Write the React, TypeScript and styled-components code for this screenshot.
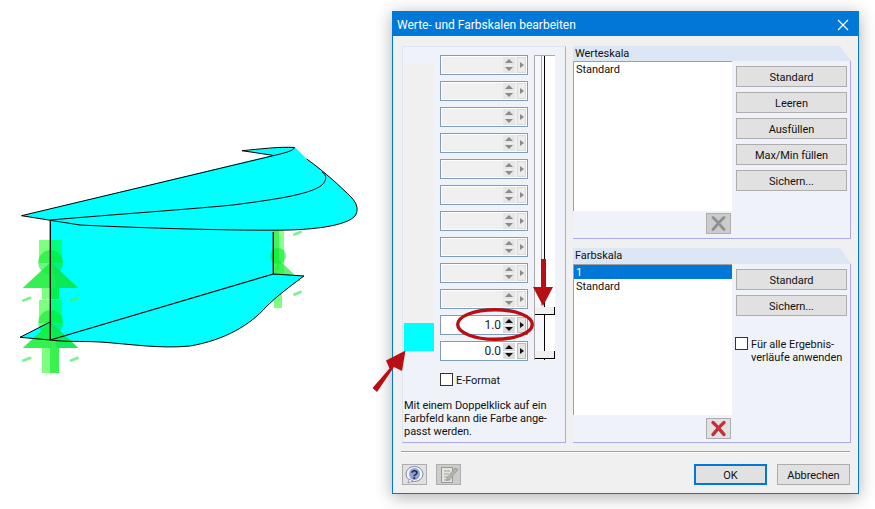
import React from "react";
import styled, { createGlobalStyle } from "styled-components";

const Global = createGlobalStyle`
  html, body { margin: 0; padding: 0; background: #fff; }
  body { font-family: Roboto, "Liberation Sans", sans-serif; font-size: 11px; letter-spacing: -0.05px; color: #111; }
`;

const Page = styled.div`
  position: relative;
  display: flex;
  align-items: flex-start;
  width: 875px;
  height: 509px;
  overflow: hidden;
  background: #fff;
`;
const Drawing = styled.svg`
  flex: none;
  width: 392px;
  height: 509px;
`;
const Overlay = styled.svg`
  position: absolute;
  left: 0;
  top: 0;
  width: 875px;
  height: 509px;
  pointer-events: none;
`;
const Dialog = styled.div`
  flex: none;
  box-sizing: border-box;
  width: 467px;
  height: 483px;
  margin-top: 11px;
  border: 1px solid #0078d7;
  background: #f0f0f0;
  box-shadow: 0 3px 16px rgba(0, 0, 0, 0.32);
`;
const TitleBar = styled.div`
  display: flex;
  align-items: center;
  justify-content: space-between;
  box-sizing: border-box;
  height: 24px;
  padding: 1px 9px 0 4px;
  background: #0078d7;
  color: #fff;
  font-size: 12px;
  letter-spacing: 0;
`;
const CloseIcon = styled.svg`
  width: 12px;
  height: 12px;
`;
const Body = styled.div`
  display: grid;
  grid-template-columns: 164px 278px;
  column-gap: 7px;
  height: 397px;
  padding: 10px 0 0 9px;
`;
const LeftPanel = styled.div`
  box-sizing: border-box;
  display: flex;
  flex-direction: column;
  height: 397px;
  padding-top: 8px;
  background: #eff3f9;
  border: 1px solid #dfe4f3;
  border-right-color: #a9a9ec;
  border-bottom-color: #a9a9ec;
`;
const ScaleArea = styled.div`
  display: flex;
  padding-left: 1px;
`;
const ColorColumn = styled.div`
  flex: none;
  display: flex;
  flex-direction: column;
  justify-content: flex-end;
  box-sizing: border-box;
  width: 30px;
  height: 288px;
  margin-top: 8px;
  margin-right: 6px;
  background: #f0f0f0;
`;
const ColorField = styled.div`
  height: 28px;
  background: #00ffff;
`;
const Rows = styled.div`
  flex: none;
  display: flex;
  flex-direction: column;
  gap: 6px;
  width: 88px;
  margin-right: 6px;
`;
const SpinRow = styled.div<{ $on?: boolean }>`
  box-sizing: border-box;
  display: flex;
  align-items: stretch;
  height: 20px;
  padding: 1px;
  border: 1px solid #7f9db9;
  background: ${(p) => (p.$on ? "#fff" : "#f0f0f0")};
  box-shadow: ${(p) => (p.$on ? "none" : "inset 0 0 0 1px #fff")};
`;
const SpinValue = styled.div`
  flex: 1;
  padding-right: 2px;
  text-align: right;
  font-size: 12px;
  line-height: 16px;
  color: #1a1a3a;
`;
const SpinStack = styled.div`
  flex: none;
  display: flex;
  flex-direction: column;
  gap: 1px;
  width: 12px;
  margin-right: 2px;
`;
const SpinButton = styled.div<{ $on?: boolean }>`
  flex: 1;
  display: flex;
  align-items: center;
  justify-content: center;
  background: ${(p) => (p.$on ? "#dcdcdc" : "#e6e6e6")};
`;
const Triangle = styled.div<{ $dir: "up" | "down" | "right"; $on?: boolean }>`
  width: 0;
  height: 0;
  ${(p) => {
    const c = p.$on ? "#111" : "#8a8a8a";
    if (p.$dir === "up") return `border-left:4px solid transparent;border-right:4px solid transparent;border-bottom:4px solid ${c};`;
    if (p.$dir === "down") return `border-left:4px solid transparent;border-right:4px solid transparent;border-top:4px solid ${c};`;
    return `border-top:3.5px solid transparent;border-bottom:3.5px solid transparent;border-left:4px solid ${c};`;
  }}
`;
const ArrowButton = styled.div<{ $on?: boolean }>`
  flex: none;
  box-sizing: border-box;
  display: flex;
  align-items: center;
  justify-content: center;
  width: 9px;
  background: ${(p) => (p.$on ? "#e4e4e4" : "#ececec")};
  border: 1px solid ${(p) => (p.$on ? "#bcbcbc" : "#dadada")};
`;
const Slider = styled.div`
  position: relative;
  flex: none;
  box-sizing: border-box;
  width: 21px;
  height: 305px;
  border-left: 1px solid #a8a8a8;
  border-top: 1px solid #a8a8a8;
  background: linear-gradient(
    to right,
    #f6f8fc 0 9px,
    #000 9px 10px,
    #fff 10px 100%
  );
`;
const SliderGroove = styled.div`
  position: absolute;
  left: 6px;
  top: 0;
  width: 1px;
  height: 250px;
  background: #a8a8a8;
`;
const Thumb = styled.div<{ $top: number }>`
  position: absolute;
  left: 0;
  top: ${(p) => p.$top}px;
  box-sizing: border-box;
  width: 20px;
  height: 8px;
  background: #f0f0f0;
  border-right: 1px solid #000;
  border-bottom: 1px solid #000;
`;
const CheckRow = styled.label`
  display: flex;
  align-items: center;
  gap: 3px;
  margin: 12px 0 0 37px;
  height: 13px;
`;
const CheckText = styled.span`
  padding-top: 1px;
`;
const Box = styled.span`
  flex: none;
  box-sizing: border-box;
  width: 13px;
  height: 13px;
  background: #fff;
  border: 1px solid #333;
`;
const Hint = styled.div`
  margin: 13px 0 0 1px;
  line-height: 13px;
  white-space: pre-line;
`;
const RightColumn = styled.div`
  display: flex;
  flex-direction: column;
  gap: 9px;
`;
const Section = styled.div<{ $h: number }>`
  display: flex;
  flex-direction: column;
  height: ${(p) => p.$h}px;
`;
const SectionHead = styled.div<{ $h: number }>`
  flex: none;
  height: ${(p) => p.$h}px;
  padding-left: 2px;
  line-height: 16px;
  background: #dce6f4;
  clip-path: polygon(0 0, calc(100% - 11px) 0, 100% 100%, 0 100%);
`;
const SectionBody = styled.div`
  flex: 1;
  box-sizing: border-box;
  display: grid;
  grid-template-columns: 159px 111px;
  column-gap: 4px;
  background: #eff3f9;
  border-right: 1px solid #a9a9ec;
  border-bottom: 1px solid #a9a9ec;
`;
const ListColumn = styled.div`
  display: flex;
  flex-direction: column;
`;
const List = styled.div`
  flex: 1;
  box-sizing: border-box;
  background: #fff;
  border-left: 1px solid #a0a0a0;
  border-top: 1px solid #a0a0a0;
`;
const ListItem = styled.div<{ $sel?: boolean }>`
  height: 14px;
  padding-left: 2px;
  line-height: 16px;
  background: ${(p) => (p.$sel ? "#0078d7" : "transparent")};
  color: ${(p) => (p.$sel ? "#fff" : "#111")};
`;
const IconRow = styled.div<{ $top: number }>`
  flex: none;
  display: flex;
  justify-content: flex-end;
  box-sizing: border-box;
  height: 27px;
  padding: ${(p) => p.$top}px 1px 0 0;
`;
const IconButton = styled.div<{ $off?: boolean }>`
  box-sizing: border-box;
  display: flex;
  align-items: center;
  justify-content: center;
  width: 25px;
  height: 21px;
  background: ${(p) => (p.$off ? "#cccccc" : "#e1e1e1")};
  border: 1px solid #adadad;
`;
const ButtonColumn = styled.div`
  display: flex;
  flex-direction: column;
  gap: 5px;
  padding-top: 5px;
`;
const Button = styled.div`
  box-sizing: border-box;
  display: flex;
  align-items: center;
  justify-content: center;
  height: 21px;
  padding-top: 1px;
  background: #e1e1e1;
  border: 1px solid #adadad;
`;
const WideCheck = styled.label`
  display: flex;
  gap: 3px;
  margin: 16px 0 0 -1px;
  line-height: 13px;
  white-space: pre-line;
`;
const Separator = styled.div`
  height: 2px;
  margin: 8px 8px 0 8px;
  background: linear-gradient(#a0a0a0 0 1px, #fff 1px 2px);
`;
const Footer = styled.div`
  display: flex;
  align-items: center;
  height: 21px;
  margin-top: 11px;
  padding: 0 8px 0 9px;
`;
const FooterGap = styled.div`
  width: 9px;
`;
const Spacer = styled.div`
  flex: 1;
`;
const DialogButton = styled.div<{ $primary?: boolean }>`
  box-sizing: border-box;
  display: flex;
  align-items: center;
  justify-content: center;
  width: 73px;
  height: 21px;
  padding-top: 1px;
  margin-left: ${(p) => (p.$primary ? 0 : 10)}px;
  background: #e1e1e1;
  border: ${(p) => (p.$primary ? "2px solid #0078d7" : "1px solid #adadad")};
`;

const Support = ({ dy }: { dy: number }) => (
  <g transform={`translate(0 ${dy})`}>
    <rect x="39" y="240" width="23" height="23" fill="#00ff00" opacity="0.5" />
    <circle cx="50.7" cy="262.5" r="12.5" fill="#00e828" opacity="0.55" />
    <polygon points="50.7,262 22.7,288 78.3,288" fill="#18ee38" opacity="0.88" />
    <polygon points="50.7,262 57,288 78.3,288" fill="#00e060" opacity="0.45" />
    <rect x="42" y="288" width="17" height={dy ? 25 : 11} fill="#00ff00" opacity="0.5" />
    <rect x="50" y="288" width="9" height={dy ? 25 : 11} fill="#00e828" opacity="0.55" />
    <line x1="23.5" y1="300.5" x2="30" y2="298" stroke="#40f060" strokeWidth="2.8" strokeLinecap="round" opacity="0.7" />
    <line x1="71" y1="300.5" x2="77.5" y2="298" stroke="#40f060" strokeWidth="2.8" strokeLinecap="round" opacity="0.7" />
  </g>
);

const Model = () => (
  <Drawing viewBox="0 0 392 509">
    <polygon points="50,220 274,228 274,274 50,340" fill="#00ffff" />
    <path
      d="M21.5,215.7 L273,155 L243,151 C262,149 280,147 295,147.3 L306.7,159 C325,172 342,188 351,197 C358,204 359,212 354,217 C345,225 320,229 290,230 C240,231 140,228 80,225 L50,220 Z"
      fill="#00ffff"
    />
    <g>
      <rect x="273" y="230" width="11" height="46" fill="#00ff00" opacity="0.45" />
      <rect x="274" y="230" width="5" height="40" fill="#00e828" opacity="0.5" />
      <circle cx="278" cy="256" r="8" fill="#00e828" opacity="0.55" />
      <polygon points="279,260 272,276 301,281" fill="#18ee38" opacity="0.7" />
      <rect x="274" y="281" width="8" height="27" fill="#00ff00" opacity="0.5" />
      <line x1="294.5" y1="234.5" x2="300.5" y2="232" stroke="#40f060" strokeWidth="2.8" strokeLinecap="round" opacity="0.7" />
      <line x1="294.5" y1="294.5" x2="300.5" y2="292" stroke="#40f060" strokeWidth="2.8" strokeLinecap="round" opacity="0.7" />
    </g>
    <path
      d="M50.3,340 L273.3,274 L304,276 C285,290 275,298 266,307 C250,325 225,340 190,346 C160,349 130,344 100,342 C80,341 65,342 50.3,340 Z"
      fill="#00ffff"
    />
    <polygon points="20,337.3 50,322 50,340" fill="#00ffff" />
    <Support dy={0} />
    <Support dy={60} />
    <g fill="none" stroke="#000" strokeWidth="1">
      <path d="M21.5,215.7 L272,156 C285,153 294,150.5 294.5,147.5 C280,146.5 260,149 242,150.7 L274,155.5" />
      <path d="M306.7,159 C325,172 342,188 351,197 C358,204 359,212 354,217 C345,225 320,229 290,230 C240,231 140,228 80,225 L21.5,215.7" />
      <path d="M50,220 C120,214 180,210 233,205 C270,200 310,195 322,185 C327,180 327,175 322,172" />
      <path d="M50.3,220 V340 M273.3,232 V274" strokeWidth="1.3" />
      <path d="M50.3,340 L273.3,274 L304,276" strokeWidth="1.2" />
      <path d="M304,276 C285,290 275,298 266,307 C250,325 225,340 190,346 C160,349 130,344 100,342 C80,341 65,342 50.3,340 L20,337.3 L50,322" />
    </g>
  </Drawing>
);

const Annotations = () => (
  <Overlay viewBox="0 0 875 509">
    <g fill="#b70f14">
      <polygon points="541,259 546,259 546,287 553,287 543,306 533,287 541,287" />
      <polygon points="372.5,388 389.5,368.5 386,360.5 405.5,350.5 402,371 394,367 377,392" />
    </g>
    <ellipse cx="495" cy="324.5" rx="37.3" ry="14.8" fill="none" stroke="#b70f14" strokeWidth="3.4" />
  </Overlay>
);

const XIcon = ({ off }: { off?: boolean }) => (
  <svg width="19" height="17" viewBox="0 0 19 17">
    <path d="M4,2.5 C7.5,5.5 11.5,10.5 15,14.5 M15,2.5 C11.5,5.5 7.5,10.5 4,14.5" fill="none" stroke={off ? "#a9aca9" : "#94474c"} strokeWidth="3.4" strokeLinecap="round" />
    <path d="M4,2.5 C7.5,5.5 11.5,10.5 15,14.5 M15,2.5 C11.5,5.5 7.5,10.5 4,14.5" fill="none" stroke={off ? "#8a8f8b" : "#e0242e"} strokeWidth="2.1" strokeLinecap="round" />
  </svg>
);

const HelpIcon = () => (
  <svg width="21" height="18" viewBox="0 0 21 18">
    <ellipse cx="10.5" cy="8" rx="8.5" ry="7.5" fill="#f6f6fa" stroke="#7d8aa8" />
    <path d="M5,13 L4,17 L9,15 Z" fill="#f6f6fa" stroke="#7d8aa8" strokeWidth="0.7" />
    <ellipse cx="10.5" cy="8" rx="5.5" ry="6" fill="#8ea4d2" />
    <text x="10.5" y="12.5" textAnchor="middle" fontFamily="Liberation Sans, sans-serif" fontSize="13" fontWeight="700" fill="#1f2d5c">?</text>
  </svg>
);

const NoteIcon = () => (
  <svg width="20" height="19" viewBox="0 0 20 19">
    <rect x="2.5" y="2.5" width="11" height="15" fill="#e4e4da" stroke="#9a9a92" />
    <path d="M5,6 H11 M5,9 H10 M5,12 H9 M5,15 H11" stroke="#9f9f98" />
    <path d="M8,13 L16,3 L19,4.5 L11,14.5 L7.5,15.5 Z" fill="#b4b4ae" stroke="#8c8c86" strokeWidth="0.6" />
  </svg>
);

const SpinnerRow = ({ value }: { value?: string }) => {
  const on = value !== undefined;
  return (
    <SpinRow $on={on}>
      <SpinValue>{value}</SpinValue>
      <SpinStack>
        <SpinButton $on={on}><Triangle $dir="up" $on={on} /></SpinButton>
        <SpinButton $on={on}><Triangle $dir="down" $on={on} /></SpinButton>
      </SpinStack>
      <ArrowButton $on={on}><Triangle $dir="right" $on={on} /></ArrowButton>
    </SpinRow>
  );
};

const values: (string | undefined)[] = [...Array(10).fill(undefined), "1.0", "0.0"];

export default function App() {
  return (
    <Page>
      <Global />
      <Model />
      <Dialog>
        <TitleBar>
          <span>Werte- und Farbskalen bearbeiten</span>
          <CloseIcon viewBox="0 0 12 12">
            <path d="M1,1 L11,11 M11,1 L1,11" stroke="#fff" strokeWidth="1.2" />
          </CloseIcon>
        </TitleBar>
        <Body>
          <LeftPanel>
            <ScaleArea>
              <ColorColumn>
                <ColorField />
              </ColorColumn>
              <Rows>
                {values.map((v, i) => (
                  <SpinnerRow key={i} value={v} />
                ))}
              </Rows>
              <Slider>
                <SliderGroove />
                <Thumb $top={251} />
                <Thumb $top={295} />
              </Slider>
            </ScaleArea>
            <CheckRow>
              <Box />
              <CheckText>E-Format</CheckText>
            </CheckRow>
            <Hint>{"Mit einem Doppelklick auf ein\nFarbfeld kann die Farbe ange-\npasst werden."}</Hint>
          </LeftPanel>
          <RightColumn>
            <Section $h={193}>
              <SectionHead $h={15}>Werteskala</SectionHead>
              <SectionBody>
                <ListColumn>
                  <List>
                    <ListItem>Standard</ListItem>
                  </List>
                  <IconRow $top={2}>
                    <IconButton $off><XIcon off /></IconButton>
                  </IconRow>
                </ListColumn>
                <ButtonColumn>
                  <Button>Standard</Button>
                  <Button>Leeren</Button>
                  <Button>Ausfüllen</Button>
                  <Button>Max/Min füllen</Button>
                  <Button>Sichern...</Button>
                </ButtonColumn>
              </SectionBody>
            </Section>
            <Section $h={195}>
              <SectionHead $h={16}>Farbskala</SectionHead>
              <SectionBody>
                <ListColumn>
                  <List>
                    <ListItem $sel>1</ListItem>
                    <ListItem>Standard</ListItem>
                  </List>
                  <IconRow $top={3}>
                    <IconButton><XIcon /></IconButton>
                  </IconRow>
                </ListColumn>
                <ButtonColumn>
                  <Button>Standard</Button>
                  <Button>Sichern...</Button>
                  <WideCheck>
                    <Box />
                    <CheckText>{"Für alle Ergebnis-\nverläufe anwenden"}</CheckText>
                  </WideCheck>
                </ButtonColumn>
              </SectionBody>
            </Section>
          </RightColumn>
        </Body>
        <Separator />
        <Footer>
          <IconButton><HelpIcon /></IconButton>
          <FooterGap />
          <IconButton $off><NoteIcon /></IconButton>
          <Spacer />
          <DialogButton $primary>OK</DialogButton>
          <DialogButton>Abbrechen</DialogButton>
        </Footer>
      </Dialog>
      <Annotations />
    </Page>
  );
}
